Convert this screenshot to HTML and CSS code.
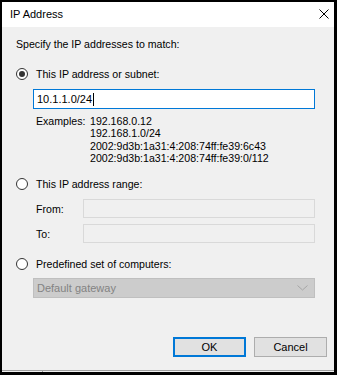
FILE: index.html
```html
<!DOCTYPE html>
<html>
<head>
<meta charset="utf-8">
<link rel="stylesheet" href="styles.css">
</head>
<body>
<div class="window">
  <div class="titlebar">
    <span class="title">IP Address</span>
    <svg class="close" width="10" height="10" viewBox="0 0 10 10"><path d="M0.5 0.5 L9.5 9.5 M9.5 0.5 L0.5 9.5" stroke="#000" stroke-width="1" fill="none"/></svg>
  </div>
  <div class="content">
    <div class="prompt">Specify the IP addresses to match:</div>

    <div class="radio-row first">
      <span class="radio checked"></span>
      <span class="label">This IP address or subnet:</span>
    </div>
    <div class="textbox focused"><span class="value">10.1.1.0/24</span><span class="caret"></span></div>
    <div class="examples">
      <div class="ex-label">Examples:</div>
      <div class="ex-list">
        <div>192.168.0.12</div>
        <div>192.168.1.0/24</div>
        <div>2002:9d3b:1a31:4:208:74ff:fe39:6c43</div>
        <div>2002:9d3b:1a31:4:208:74ff:fe39:0/112</div>
      </div>
    </div>

    <div class="radio-row second">
      <span class="radio"></span>
      <span class="label">This IP address range:</span>
    </div>
    <div class="range-row from">
      <span class="range-label">From:</span>
      <div class="textbox disabled range-box"></div>
    </div>
    <div class="range-row to">
      <span class="range-label">To:</span>
      <div class="textbox disabled range-box"></div>
    </div>

    <div class="radio-row third">
      <span class="radio"></span>
      <span class="label">Predefined set of computers:</span>
    </div>
    <div class="combo">
      <span class="combo-text">Default gateway</span>
      <svg class="chevron" width="11" height="6" viewBox="0 0 11 6"><path d="M0.5 0.5 L5.5 5 L10.5 0.5" stroke="#a6a6a6" stroke-width="1" fill="none"/></svg>
    </div>

    <div class="buttons">
      <div class="btn default">OK</div>
      <div class="btn">Cancel</div>
    </div>
  </div>
  <div class="statusbar"><span class="status-cell"></span></div>
</div>
</body>
</html>
```
FILE: styles.css
```css
html, body {
  margin: 0;
  padding: 0;
  width: 337px;
  height: 375px;
  overflow: hidden;
  background: #000;
}

.window {
  box-sizing: border-box;
  width: 337px;
  height: 375px;
  border-style: solid;
  border-color: #000;
  border-width: 2px 3px 3px 2px;
  display: flex;
  flex-direction: column;
  font-family: "Liberation Sans", Arial, sans-serif;
  font-size: 10.6px;
  color: #000;
}

.titlebar {
  height: 25px;
  background: #fff;
  display: flex;
  align-items: center;
  justify-content: space-between;
  padding: 0 5px 2px 8px;
  box-sizing: border-box;
  flex: none;
}

.title {
  font-size: 11px;
}

.close {
  margin-top: 1px;
}

.content {
  flex: 1;
  background: #f0f0f0;
  display: flex;
  flex-direction: column;
  padding: 11px 0 13px 14px;
  box-sizing: border-box;
}

.prompt {
  height: 13px;
  line-height: 13px;
}

.radio-row {
  display: flex;
  align-items: center;
  height: 14px;
  gap: 8px;
}

.radio-row.first { margin-top: 16px; }
.radio-row.second { margin-top: 13px; }
.radio-row.third { margin-top: 14px; }

.label {
  line-height: 14px;
}

.radio {
  box-sizing: border-box;
  width: 12px;
  height: 12px;
  border-radius: 50%;
  border: 1px solid #333;
  background: #fff;
  display: flex;
  align-items: center;
  justify-content: center;
  flex: none;
}

.radio.checked::after {
  content: "";
  width: 6px;
  height: 6px;
  border-radius: 50%;
  background: #333;
}

.textbox {
  box-sizing: border-box;
  height: 20px;
  border: 1px solid #d3d3d3;
  display: flex;
  align-items: center;
  padding-left: 3px;
}

.textbox.focused {
  margin-top: 8px;
  margin-left: 17px;
  width: 282px;
  border-color: #0078d7;
  background: #fff;
  font-size: 11px;
}

.caret {
  display: inline-block;
  width: 1px;
  height: 13px;
  background: #000;
  margin-left: 1px;
}

.examples {
  display: flex;
  margin-top: 6px;
  margin-left: 20px;
  line-height: 12.3px;
}

.ex-label {
  width: 54px;
  flex: none;
}

.range-row {
  display: flex;
  align-items: center;
  margin-left: 20px;
}

.range-row.from { margin-top: 8px; }
.range-row.to { margin-top: 6px; }

.range-label {
  width: 47px;
  flex: none;
}

.range-box {
  width: 232px;
  height: 19px;
  background: #f0f0f0;
  border-color: #d9d9d9;
}

.combo {
  box-sizing: border-box;
  margin-top: 7px;
  margin-left: 17px;
  width: 282px;
  height: 20px;
  background: #cccccc;
  border: 1px solid #bfbfbf;
  display: flex;
  align-items: center;
  justify-content: space-between;
  padding: 0 6px 0 3px;
  color: #838383;
  font-size: 11px;
}

.buttons {
  margin-top: auto;
  display: flex;
  justify-content: flex-end;
  gap: 8px;
  padding-right: 7px;
}

.btn {
  box-sizing: border-box;
  width: 73px;
  height: 20px;
  background: #e1e1e1;
  border: 1px solid #adadad;
  display: flex;
  align-items: center;
  justify-content: center;
  font-size: 11px;
}

.btn.default {
  border: 2px solid #0078d7;
}

.statusbar {
  height: 2px;
  flex: none;
  background: #f0f0f0;
  border-top: 1px solid #a0a0a0;
  box-sizing: border-box;
  display: flex;
}

.status-cell {
  width: 40px;
  border-right: 1px solid #a0a0a0;
}
```
